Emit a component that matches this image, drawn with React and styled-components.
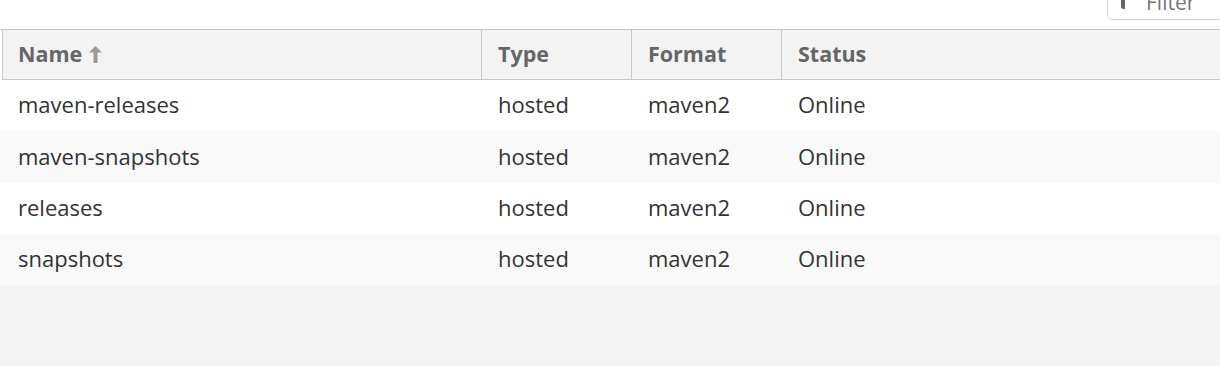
import React from "react";
import styled, { createGlobalStyle } from "styled-components";

const GlobalStyle = createGlobalStyle`
  html, body {
    margin: 0;
    padding: 0;
    background: #f3f3f3;
  }
  body {
    font-family: "Open Sans", "Liberation Sans", sans-serif;
  }
`;

const Page = styled.div`
  width: 1220px;
  height: 366px;
  display: flex;
  flex-direction: column;
  overflow: hidden;
  background: #f3f3f3;
`;

const Toolbar = styled.div`
  height: 29px;
  flex: none;
  background: #fff;
  display: flex;
  justify-content: flex-end;
  align-items: flex-end;
  box-sizing: border-box;
`;

const FilterBox = styled.div`
  width: 140px;
  height: 36px;
  margin-bottom: 9px;
  margin-right: -27px;
  flex: none;
  box-sizing: border-box;
  border: 1px solid #d4d4d4;
  border-radius: 5px;
  background: #fff;
  display: flex;
  align-items: center;
  gap: 15px;
  padding-left: 7px;
  color: #777;
  font-size: 21px;
`;

const Grid = styled.div`
  flex: none;
  background: #fff;
  border-top: 1px solid #c8c8c8;
`;

const HeaderRow = styled.div`
  display: grid;
  grid-template-columns: 478px 150px 150px 1fr;
  height: 50px;
  box-sizing: border-box;
  background: #f3f3f3;
  border-bottom: 1px solid #c8c8c8;
  margin-left: 2px;
  border-left: 1px solid #c8c8c8;
`;

const HeadCell = styled.div`
  display: flex;
  align-items: center;
  gap: 7px;
  padding-left: ${(p) => (p.first ? "15px" : "16px")};
  border-left: ${(p) => (p.first ? "none" : "1px solid #c8c8c8")};
  font-weight: 700;
  font-size: 21.5px;
  color: #666;
  padding-bottom: 2px;
`;

const Row = styled.div`
  display: grid;
  grid-template-columns: 481px 150px 150px 1fr;
  height: ${(p) => p.h}px;
  align-items: center;
  background: ${(p) => (p.striped ? "#f9f9f9" : "#fff")};
`;

const Cell = styled.div`
  padding-left: ${(p) => (p.first ? "18px" : "17px")};
  padding-bottom: 3px;
  font-size: 22px;
  color: #333;
`;

const repos = [
  { name: "maven-releases", h: 51 },
  { name: "maven-snapshots", h: 52 },
  { name: "releases", h: 51 },
  { name: "snapshots", h: 51 },
];

const FunnelIcon = () => (
  <svg width="16" height="24" viewBox="0 0 16 24" style={{ marginTop: "-8px" }}>
    <path d="M0 0 H16 L10 8 V22 Q10 24 8 23 L7 22.5 Q6 22 6 20 V8 Z" fill="#666" />
  </svg>
);

const SortArrow = () => (
  <svg width="13" height="17" viewBox="0 0 13 17" style={{ marginTop: "2px" }}>
    <path d="M6.5 0 L13 6.5 H8.5 V17 H4.5 V6.5 H0 Z" fill="#9a9a9a" />
  </svg>
);

export default function App() {
  return (
    <Page>
      <GlobalStyle />
      <Toolbar>
        <FilterBox>
          <FunnelIcon />
          <span>Filter</span>
        </FilterBox>
      </Toolbar>
      <Grid>
        <HeaderRow>
          <HeadCell first>
            Name <SortArrow />
          </HeadCell>
          <HeadCell>Type</HeadCell>
          <HeadCell>Format</HeadCell>
          <HeadCell>Status</HeadCell>
        </HeaderRow>
        {repos.map((r, i) => (
          <Row key={r.name} h={r.h} striped={i % 2 === 1}>
            <Cell first>{r.name}</Cell>
            <Cell>hosted</Cell>
            <Cell>maven2</Cell>
            <Cell>Online</Cell>
          </Row>
        ))}
      </Grid>
    </Page>
  );
}
